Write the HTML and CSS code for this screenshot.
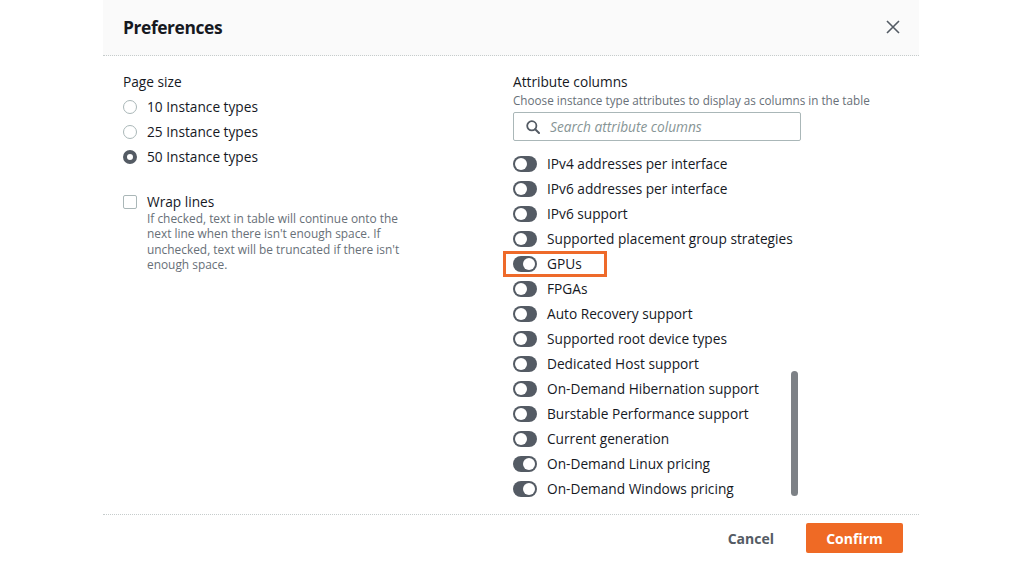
FILE: index.html
```html
<!DOCTYPE html>
<html lang="en">
<head>
<meta charset="utf-8">
<title>Preferences</title>
<link rel="stylesheet" href="styles.css">
</head>
<body>
<div class="modal">
  <div class="header">
    <h2 class="title">Preferences</h2>
    <button class="close" aria-label="Close">
      <svg width="14" height="14" viewBox="0 0 14 14"><path d="M1 1L13 13M13 1L1 13" stroke="#545b64" stroke-width="1.6" fill="none"/></svg>
    </button>
  </div>
  <div class="content">
    <div class="col">
      <div class="label">Page size</div>
      <div class="radios">
        <div class="radio-row"><span class="radio"></span><span>10 Instance types</span></div>
        <div class="radio-row"><span class="radio"></span><span>25 Instance types</span></div>
        <div class="radio-row"><span class="radio checked"></span><span>50 Instance types</span></div>
      </div>
      <div class="wrap">
        <div class="check-row"><span class="checkbox"></span><span>Wrap lines</span></div>
        <p class="wrap-desc">If checked, text in table will continue onto the next line when there isn't enough space. If unchecked, text will be truncated if there isn't enough space.</p>
      </div>
    </div>
    <div class="col">
      <div class="label">Attribute columns</div>
      <div class="desc">Choose instance type attributes to display as columns in the table</div>
      <div class="search">
        <svg width="14" height="14" viewBox="0 0 14 14"><circle cx="5.8" cy="5.8" r="4.6" stroke="#545b64" stroke-width="1.8" fill="none"/><path d="M9.2 9.2L13 13" stroke="#545b64" stroke-width="2" stroke-linecap="round"/></svg>
        <span class="placeholder">Search attribute columns</span>
      </div>
      <ul class="toggles">
        <li><span class="toggle"></span>IPv4 addresses per interface</li>
        <li><span class="toggle"></span>IPv6 addresses per interface</li>
        <li><span class="toggle"></span>IPv6 support</li>
        <li><span class="toggle"></span>Supported placement group strategies</li>
        <li class="highlighted"><span class="toggle on"></span>GPUs<span class="mark"></span></li>
        <li><span class="toggle"></span>FPGAs</li>
        <li><span class="toggle"></span>Auto Recovery support</li>
        <li><span class="toggle"></span>Supported root device types</li>
        <li><span class="toggle"></span>Dedicated Host support</li>
        <li><span class="toggle"></span>On-Demand Hibernation support</li>
        <li><span class="toggle"></span>Burstable Performance support</li>
        <li><span class="toggle"></span>Current generation</li>
        <li><span class="toggle on"></span>On-Demand Linux pricing</li>
        <li><span class="toggle on"></span>On-Demand Windows pricing</li>
      </ul>
    </div>
    <span class="scrollbar"></span>
  </div>
  <div class="footer">
    <button class="btn-link">Cancel</button>
    <button class="btn-primary">Confirm</button>
  </div>
</div>
</body>
</html>
```

FILE: styles.css
```css
* { box-sizing: border-box; }
body {
  margin: 0;
  background: #fff;
  font-family: "Open Sans", "Noto Sans", sans-serif;
  font-size: 13.7px;
  color: #16191f;
}
.modal {
  width: 816px;
  margin: 0 auto;
}
.header {
  height: 56px;
  background: #fafafa;
  border-bottom: 1px dotted #c6cccc;
  display: flex;
  align-items: center;
  justify-content: space-between;
  padding: 0 19px 2px 20px;
}
.title {
  margin: 0;
  font-size: 17.4px;
  font-weight: 700;
  letter-spacing: -0.4px;
  color: #16191f;
}
.close {
  border: 0;
  background: none;
  padding: 0;
  width: 14px;
  height: 14px;
  display: flex;
}
.content {
  position: relative;
  display: grid;
  grid-template-columns: 370px 1fr;
  column-gap: 20px;
  padding: 16px 20px 13px;
}
.label {
  line-height: 20px;
  height: 20px;
}
.radios {
  margin-top: 2px;
}
.radio-row, .check-row {
  display: flex;
  align-items: center;
  height: 25px;
  gap: 10px;
}
.radio {
  width: 14px;
  height: 14px;
  border-radius: 50%;
  border: 1px solid #aab7b8;
  background: #fff;
}
.radio.checked {
  border: 4px solid #545b64;
}
.wrap {
  margin-top: 20px;
}
.checkbox {
  width: 14px;
  height: 14px;
  border: 1px solid #aab7b8;
  border-radius: 2px;
  background: #fff;
}
.wrap-desc {
  margin: -3px 0 0 24px;
  font-size: 11.9px;
  line-height: 15.4px;
  color: #687078;
  width: 262px;
}
.desc {
  font-size: 11.7px;
  line-height: 16px;
  color: #687078;
  white-space: nowrap;
}
.search {
  margin-top: 4px;
  width: 288px;
  height: 29px;
  border: 1px solid #aab7b8;
  border-radius: 2px;
  display: flex;
  align-items: center;
  gap: 10px;
  padding-left: 12px;
}
.placeholder {
  font-style: italic;
  color: #879596;
}
.toggles {
  list-style: none;
  margin: 10px 0 0;
  padding: 0;
}
.toggles li {
  position: relative;
  display: flex;
  align-items: center;
  height: 25px;
  gap: 10px;
}
.toggle {
  position: relative;
  width: 24px;
  height: 16px;
  border-radius: 8px;
  background: #545b64;
  flex: none;
}
.toggle::after {
  content: "";
  position: absolute;
  top: 2px;
  left: 2px;
  width: 12px;
  height: 12px;
  border-radius: 50%;
  background: #fff;
}
.toggle.on::after {
  left: 10px;
}
.mark {
  position: absolute;
  left: -10px;
  top: 0;
  width: 104px;
  height: 26px;
  border: 3px solid #ee6a2a;
}
.scrollbar {
  position: absolute;
  left: 688px;
  top: 315px;
  width: 7px;
  height: 125px;
  border-radius: 4px;
  background: #7d8186;
}
.footer {
  border-top: 1px dotted #c6cccc;
  display: flex;
  justify-content: flex-end;
  align-items: center;
  padding: 8px 16px 0 0;
  gap: 12px;
}
.btn-link {
  border: 0;
  background: none;
  font-family: inherit;
  font-size: 14px;
  font-weight: 700;
  color: #545b64;
  padding: 4px 20px;
  height: 30px;
}
.btn-primary {
  border: 0;
  border-radius: 2px;
  background: #ef6a25;
  color: #fff;
  font-family: inherit;
  font-size: 14px;
  font-weight: 700;
  width: 97px;
  height: 30px;
  padding: 0;
}
```
